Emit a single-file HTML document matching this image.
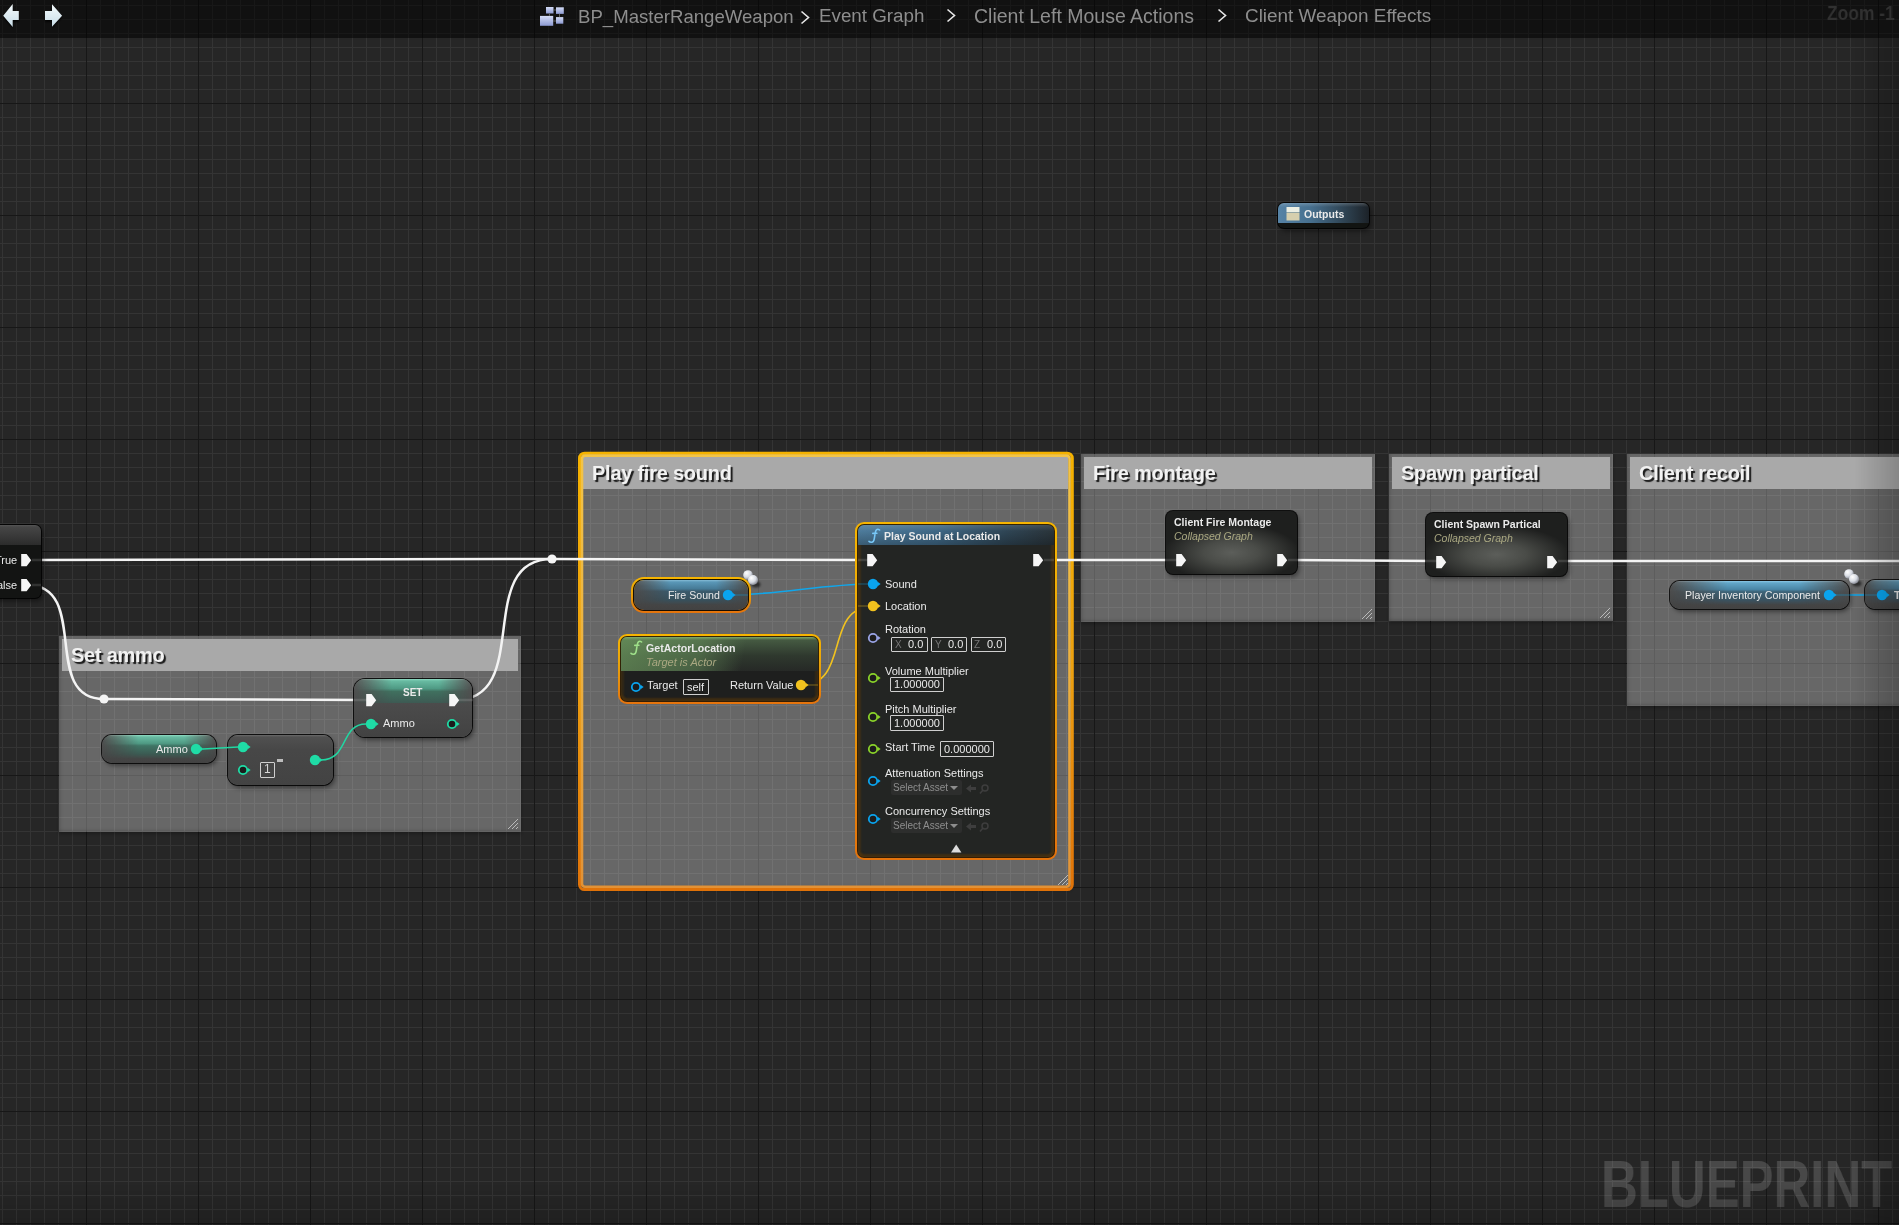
<!DOCTYPE html>
<html><head><meta charset="utf-8">
<style>
*{margin:0;padding:0;box-sizing:border-box}
html,body{width:1899px;height:1225px;overflow:hidden;background:#262626;font-family:"Liberation Sans",sans-serif}
#g{position:absolute;left:0;top:0;width:1899px;height:1225px;
background-color:#262626;
background-image:
linear-gradient(to right,#171717 1px,transparent 1px),
linear-gradient(to bottom,#171717 1px,transparent 1px),
linear-gradient(to right,#343434 1px,transparent 1px),
linear-gradient(to bottom,#343434 1px,transparent 1px);
background-size:112px 100%,100% 112px,14px 100%,100% 14px;
background-position:86px 0,0 103px,2px 0,0 5px;}
.abs{position:absolute}
.cm{position:absolute;background:rgba(255,255,255,0.30);box-shadow:inset 3px 0 3px -1px rgba(0,0,0,0.10),inset 0 -3px 3px -1px rgba(0,0,0,0.12),0 2px 3px rgba(0,0,0,0.25)}
.cmh{position:absolute;left:3px;top:3px;right:3px;height:32px;background:#a9a9a9}
.cmt{position:absolute;left:12px;top:8px;font-weight:bold;font-size:20px;letter-spacing:-0.25px;line-height:22px;color:#f2f2f2;white-space:nowrap;text-shadow:2px 2px 1px rgba(0,0,0,0.85)}
.rh{position:absolute;left:auto!important;top:auto!important;right:2px;bottom:2px;width:12px;height:12px}
#bar{position:absolute;left:0;top:0;width:1899px;height:38px;background:rgba(0,0,0,0.53)}
.crumb{position:absolute;top:5px;font-size:19px;color:#8e8e8e;white-space:nowrap}
.sep{position:absolute;top:8px}
#wm{position:absolute;left:1601px;top:1146px;font-size:66px;line-height:76px;font-weight:bold;color:rgba(255,255,255,0.16);white-space:nowrap;transform:scaleX(0.771);transform-origin:0 0;letter-spacing:0}

.node{position:absolute;border-radius:7px;background:#1d1e1d;box-shadow:0 0 0 1px rgba(0,0,0,0.85),2px 3px 5px rgba(0,0,0,0.45)}
.t11{position:absolute;font-size:11px;color:#eaeaea;white-space:nowrap;line-height:13px}
.tb{font-weight:bold}
.ti{font-style:italic;color:#aaa882}
.pill{position:absolute;border-radius:15px;box-shadow:0 0 0 1px rgba(0,0,0,0.8),2px 3px 4px rgba(0,0,0,0.4)}
.box{position:absolute;border:1px solid #cfcfcf;border-radius:1px}
svg{position:absolute;left:0;top:0;overflow:visible}

.pin{position:absolute;overflow:visible}
.sel{position:absolute;background:linear-gradient(to bottom,#f7b500,#e9a20a 45%,#e5730c);border-radius:10px}
.hdr{position:absolute;left:0;top:0;right:0}
.t11,.cmt,.crumb,#wm,#bar div{will-change:transform}

.band{position:absolute;left:0;right:0;top:0;-webkit-mask-image:linear-gradient(to right,transparent 0,rgba(0,0,0,0.35) 12%,#000 32%,#000 72%,rgba(0,0,0,0.35) 90%,transparent 100%);mask-image:linear-gradient(to right,transparent 0,rgba(0,0,0,0.35) 12%,#000 32%,#000 72%,rgba(0,0,0,0.35) 90%,transparent 100%)}
.gbase{background:linear-gradient(to bottom,#7a7a7a 0,#5a5a5a 1.5px,#4f4f4f 20%,#474747 70%,#424242 100%)}
</style></head><body>
<div id="g"></div>

<!-- comments -->
<div class="cm" style="left:59px;top:636px;width:462px;height:196px">
  <div class="cmh"></div><div class="cmt">Set ammo</div><svg class="rh" width="12" height="12"><path d="M1,11 L11,1 M5,11 L11,5 M9,11 L11,9" stroke="#d0d0d0" stroke-width="1" opacity="0.8"/></svg>
</div>
<div class="cm" style="left:580px;top:454px;width:491px;height:434px">
  <div class="cmh"></div><div class="cmt">Play fire sound</div><svg class="rh" width="12" height="12"><path d="M1,11 L11,1 M5,11 L11,5 M9,11 L11,9" stroke="#d0d0d0" stroke-width="1" opacity="0.8"/></svg>
</div>
<div class="cm" style="left:1081px;top:454px;width:294px;height:168px">
  <div class="cmh"></div><div class="cmt">Fire montage</div><svg class="rh" width="12" height="12"><path d="M1,11 L11,1 M5,11 L11,5 M9,11 L11,9" stroke="#d0d0d0" stroke-width="1" opacity="0.8"/></svg>
</div>
<div class="cm" style="left:1389px;top:454px;width:224px;height:167px">
  <div class="cmh"></div><div class="cmt">Spawn partical</div><svg class="rh" width="12" height="12"><path d="M1,11 L11,1 M5,11 L11,5 M9,11 L11,9" stroke="#d0d0d0" stroke-width="1" opacity="0.8"/></svg>
</div>
<div class="cm" style="left:1627px;top:454px;width:290px;height:252px">
  <div class="cmh"></div><div class="cmt">Client recoil</div>
</div>



<svg width="1899" height="1225" style="left:0;top:0">
 <defs>
  <linearGradient id="og" x1="0" y1="0" x2="0" y2="1"><stop offset="0" stop-color="#f5b200"/><stop offset="0.5" stop-color="#eca010"/><stop offset="1" stop-color="#e07208"/></linearGradient>
  <linearGradient id="og2" x1="0" y1="0" x2="0" y2="1"><stop offset="0" stop-color="#f3c447"/><stop offset="0.5" stop-color="#ebb040"/><stop offset="1" stop-color="#e29236"/></linearGradient>
 </defs>
 <rect x="579.5" y="453.2" width="492.8" height="436.4" rx="5" fill="none" stroke="url(#og)" stroke-width="3"/>
 <rect x="582" y="455.6" width="487.5" height="431.2" rx="3" fill="none" stroke="url(#og2)" stroke-width="2.6"/>
</svg>
<!-- wires -->
<svg width="1899" height="1225" style="left:0;top:0">
  <g fill="none" stroke="#f4f4f4" stroke-width="2.5">
    <path d="M32,560 L552,559"/>
    <path d="M552,559 L868,560"/>
    <path d="M27,585 C91,585 40,699 104,699"/>
    <path d="M104,699 L366,700"/>
    <path d="M455,700 C534,700 473,559 552,559"/>
    <path d="M1044,560 L1176,560"/>
    <path d="M1288,560 L1436,561"/>
    <path d="M1558,561 L1905,561"/>
  </g>
  <g fill="none" stroke-width="1.6">
    <path d="M728,595 C780,595 821,584 873,584" stroke="#11a6ea"/>
    <path d="M801,685 C851,685 823,606.5 873,606.5" stroke="#f1c21f"/>
    <path d="M1834,595 L1882,595" stroke="#11a6ea"/>
  </g>
  <circle cx="104" cy="699" r="4.6" fill="#f4f4f4"/>
  <circle cx="552" cy="559" r="4.6" fill="#f4f4f4"/>
</svg>


<!-- branch node (partial) -->
<div class="node" style="left:-60px;top:525px;width:100.5px;height:73px;border-radius:6px;background:#131413;overflow:hidden">
  <div class="hdr" style="height:20px;background:linear-gradient(to bottom,#555 0,#464646 2px,#2c2c2c 100%)"></div>
</div>
<div class="t11" style="right:1882px;top:554px">True</div>
<div class="t11" style="right:1882px;top:579px">alse</div>
<svg class="pin" style="left:21px;top:554px" width="12" height="13"><path d="M0.2,0 H5.6 L10.2,6.15 L5.6,12.3 H0.2 Z" fill="#f6f6f6"/></svg><svg class="pin" style="left:21px;top:579px" width="12" height="13"><path d="M0.2,0 H5.6 L10.2,6.15 L5.6,12.3 H0.2 Z" fill="#f6f6f6"/></svg>

<!-- Ammo getter -->
<div class="pill gbase" style="left:102px;top:735px;width:114px;height:28px;border-radius:10px;overflow:hidden"><div class="band" style="height:24px;background:linear-gradient(to bottom,#8fdcc4 0,#68bba2 8%,#4f9a84 35%,#3f7565 45%,#3b5a52 80%,rgba(60,80,75,0) 100%)"></div></div>
<div class="t11" style="left:156px;top:743px">Ammo</div>
<svg class="pin" style="left:190px;top:743px" width="16" height="12"><circle cx="6" cy="6" r="5.2" fill="#1fdca6"/><path d="M10.6,3.8 L13.6,6 L10.6,8.2 Z" fill="#1fdca6"/></svg>

<!-- subtract -->
<div class="node" style="left:228px;top:735px;width:105px;height:50px;border-radius:10px;background:linear-gradient(to bottom,#6a6a6a 0,#505050 2px,#474747 30%,#434343)"></div>
<svg class="pin" style="left:237px;top:741px" width="16" height="12"><circle cx="6" cy="6" r="5.2" fill="#1fdca6"/><path d="M10.6,3.8 L13.6,6 L10.6,8.2 Z" fill="#1fdca6"/></svg><svg class="pin" style="left:237px;top:764px" width="16" height="12"><circle cx="6" cy="6" r="4.2" fill="#1c1c1c" stroke="#1fdca6" stroke-width="1.8"/><path d="M10.6,3.8 L13.6,6 L10.6,8.2 Z" fill="#1fdca6"/></svg><svg class="pin" style="left:309px;top:754px" width="16" height="12"><circle cx="6" cy="6" r="5.2" fill="#1fdca6"/><path d="M10.6,3.8 L13.6,6 L10.6,8.2 Z" fill="#1fdca6"/></svg>
<div class="box" style="left:260px;top:762px;width:15px;height:16px"></div>
<div class="t11" style="left:264px;top:763px;font-size:12px;color:#d8d8d8">1</div>
<div class="abs" style="left:277px;top:759px;width:6px;height:3px;background:#bdbdbd"></div>

<!-- SET -->
<div class="node gbase" style="left:354px;top:679px;width:118px;height:58px;border-radius:11px;overflow:hidden"><div class="band" style="height:24px;background:linear-gradient(to bottom,#8fdcc4 0,#68bba2 8%,#4f9a84 40%,#40705f 52%,#3d5a53 100%)"></div></div>
<div class="t11 tb" style="left:403px;top:686px;font-size:10px">SET</div>
<svg class="pin" style="left:366px;top:694px" width="12" height="13"><path d="M0.2,0 H5.6 L10.2,6.15 L5.6,12.3 H0.2 Z" fill="#f6f6f6"/></svg><svg class="pin" style="left:449px;top:694px" width="12" height="13"><path d="M0.2,0 H5.6 L10.2,6.15 L5.6,12.3 H0.2 Z" fill="#f6f6f6"/></svg>
<svg class="pin" style="left:365px;top:718px" width="16" height="12"><circle cx="6" cy="6" r="5.2" fill="#1fdca6"/><path d="M10.6,3.8 L13.6,6 L10.6,8.2 Z" fill="#1fdca6"/></svg>
<div class="t11" style="left:383px;top:717px">Ammo</div>
<svg class="pin" style="left:446px;top:718px" width="16" height="12"><circle cx="6" cy="6" r="4.2" fill="#1c1c1c" stroke="#1fdca6" stroke-width="1.8"/><path d="M10.6,3.8 L13.6,6 L10.6,8.2 Z" fill="#1fdca6"/></svg>

<!-- Fire Sound getter (selected) -->
<div class="sel" style="left:631px;top:577px;width:120px;height:36px;border-radius:13px"></div>
<div class="pill gbase" style="left:634px;top:580px;width:114px;height:30px;border-radius:10px;overflow:hidden;box-shadow:0 0 0 1px rgba(0,0,0,0.9)"><div class="band" style="height:25px;background:linear-gradient(to bottom,#86bcd6 0,#5a98b8 8%,#467a96 35%,#3a5a6c 45%,#37505c 80%,rgba(58,80,95,0) 100%)"></div></div>
<div class="t11" style="left:668px;top:589px;font-size:10.6px">Fire Sound</div>
<svg class="pin" style="left:722px;top:589px" width="16" height="12"><circle cx="6" cy="6" r="5.2" fill="#0aa4ee"/><path d="M10.6,3.8 L13.6,6 L10.6,8.2 Z" fill="#0aa4ee"/></svg>

<!-- GetActorLocation (selected) -->
<div class="sel" style="left:618px;top:634px;width:203px;height:70px;border-radius:9px"></div>
<div class="node" style="left:621px;top:637px;width:197px;height:64px;border-radius:6px;box-shadow:0 0 0 1px rgba(30,20,5,0.9),inset 0 -3px 2px rgba(90,55,10,0.55),inset 3px 0 2px rgba(90,60,10,0.35),inset -3px 0 2px rgba(90,60,10,0.35);background:#1e1f1e;overflow:hidden">
  <div class="hdr" style="height:34px;background:linear-gradient(to bottom,rgba(140,188,116,0.75) 0,rgba(122,168,102,0.5) 1.5px,rgba(120,170,100,0) 3px),linear-gradient(100deg,rgba(110,155,95,0.7) 0,rgba(100,140,90,0.55) 40%,rgba(90,130,85,0) 62%),linear-gradient(to bottom,rgba(85,115,80,0.75) 0,rgba(60,80,58,0.4) 55%,rgba(40,45,40,0) 100%),#262926"></div>
</div>
<svg class="pin" style="left:630px;top:640px" width="13" height="16"><path d="M11.6,2 C10.6,1.2 9.2,1.1 8.4,1.8 C7.6,2.5 7.4,3.6 7.2,5 L6.2,11.2 C5.9,13 5.1,14.2 3.7,14.3 C2.6,14.4 1.6,14 1,13.4 M4.8,5.4 L8.9,5.3" fill="none" stroke="#9fe08a" stroke-width="1.6" stroke-linecap="round"/></svg>
<div class="t11 tb" style="left:646px;top:642px;font-size:10.6px">GetActorLocation</div>
<div class="t11 ti" style="left:646px;top:656px">Target is Actor</div>
<svg class="pin" style="left:630px;top:681px" width="16" height="12"><circle cx="6" cy="6" r="4.2" fill="#1c1c1c" stroke="#0aa4ee" stroke-width="1.8"/><path d="M10.6,3.8 L13.6,6 L10.6,8.2 Z" fill="#0aa4ee"/></svg>
<div class="t11" style="left:647px;top:679px">Target</div>
<div class="box" style="left:683px;top:679px;width:26px;height:16px"></div>
<div class="t11" style="left:687px;top:681px">self</div>
<div class="t11" style="left:730px;top:679px">Return Value</div>
<svg class="pin" style="left:795px;top:679px" width="16" height="12"><circle cx="6" cy="6" r="5.2" fill="#f2c21e"/><path d="M10.6,3.8 L13.6,6 L10.6,8.2 Z" fill="#f2c21e"/></svg>


<!-- Play Sound at Location (selected) -->
<div class="sel" style="left:855px;top:522px;width:202px;height:338px;border-radius:9px"></div>
<div class="node" style="left:858px;top:525px;width:196px;height:332px;border-radius:6px;box-shadow:0 0 0 1px rgba(30,20,5,0.9),inset 0 -3px 2px rgba(90,55,10,0.55),inset 3px 0 2px rgba(90,60,10,0.45),inset -3px 0 2px rgba(90,60,10,0.45);background:#232523;overflow:hidden">
  <div class="hdr" style="height:20px;background:linear-gradient(to bottom,rgba(255,255,255,0.12),rgba(0,0,0,0) 30%,rgba(0,0,0,0.25)),linear-gradient(to right,#4d7b9b,#3f6886 40%,#2f4656 75%,#2a343a)"></div>
</div>
<svg class="pin" style="left:868px;top:528px" width="13" height="16"><path d="M11.6,2 C10.6,1.2 9.2,1.1 8.4,1.8 C7.6,2.5 7.4,3.6 7.2,5 L6.2,11.2 C5.9,13 5.1,14.2 3.7,14.3 C2.6,14.4 1.6,14 1,13.4 M4.8,5.4 L8.9,5.3" fill="none" stroke="#78c8f8" stroke-width="1.6" stroke-linecap="round"/></svg>
<div class="t11 tb" style="left:884px;top:530px;font-size:10.5px">Play Sound at Location</div>
<svg class="pin" style="left:867px;top:554px" width="12" height="13"><path d="M0.2,0 H5.6 L10.2,6.15 L5.6,12.3 H0.2 Z" fill="#f6f6f6"/></svg><svg class="pin" style="left:1033px;top:554px" width="12" height="13"><path d="M0.2,0 H5.6 L10.2,6.15 L5.6,12.3 H0.2 Z" fill="#f6f6f6"/></svg>
<svg class="pin" style="left:867px;top:578px" width="16" height="12"><circle cx="6" cy="6" r="5.2" fill="#0aa4ee"/><path d="M10.6,3.8 L13.6,6 L10.6,8.2 Z" fill="#0aa4ee"/></svg><div class="t11" style="left:885px;top:578px">Sound</div>
<svg class="pin" style="left:867px;top:600px" width="16" height="12"><circle cx="6" cy="6" r="5.2" fill="#f2c21e"/><path d="M10.6,3.8 L13.6,6 L10.6,8.2 Z" fill="#f2c21e"/></svg><div class="t11" style="left:885px;top:600px">Location</div>
<svg class="pin" style="left:867px;top:632px" width="16" height="12"><circle cx="6" cy="6" r="4.2" fill="#1c1c1c" stroke="#9aa4e6" stroke-width="1.8"/><path d="M10.6,3.8 L13.6,6 L10.6,8.2 Z" fill="#9aa4e6"/></svg><div class="t11" style="left:885px;top:623px">Rotation</div>
<div class="box" style="left:891px;top:637px;width:37px;height:15px"></div>
<div class="box" style="left:931px;top:637px;width:36px;height:15px"></div>
<div class="box" style="left:971px;top:637px;width:35px;height:15px"></div>
<div class="t11" style="left:895px;top:638px;font-size:10px;color:#777">X</div><div class="t11" style="left:908px;top:638px;font-size:11px">0.0</div>
<div class="t11" style="left:935px;top:638px;font-size:10px;color:#777">Y</div><div class="t11" style="left:948px;top:638px;font-size:11px">0.0</div>
<div class="t11" style="left:974px;top:638px;font-size:10px;color:#777">Z</div><div class="t11" style="left:987px;top:638px;font-size:11px">0.0</div>
<svg class="pin" style="left:867px;top:672px" width="16" height="12"><circle cx="6" cy="6" r="4.2" fill="#1c1c1c" stroke="#8ad32a" stroke-width="1.8"/><path d="M10.6,3.8 L13.6,6 L10.6,8.2 Z" fill="#8ad32a"/></svg><div class="t11" style="left:885px;top:665px">Volume Multiplier</div>
<div class="box" style="left:890px;top:677px;width:54px;height:15px"></div><div class="t11" style="left:894px;top:678px">1.000000</div>
<svg class="pin" style="left:867px;top:711px" width="16" height="12"><circle cx="6" cy="6" r="4.2" fill="#1c1c1c" stroke="#8ad32a" stroke-width="1.8"/><path d="M10.6,3.8 L13.6,6 L10.6,8.2 Z" fill="#8ad32a"/></svg><div class="t11" style="left:885px;top:703px">Pitch Multiplier</div>
<div class="box" style="left:890px;top:715px;width:54px;height:16px"></div><div class="t11" style="left:894px;top:717px">1.000000</div>
<svg class="pin" style="left:867px;top:743px" width="16" height="12"><circle cx="6" cy="6" r="4.2" fill="#1c1c1c" stroke="#8ad32a" stroke-width="1.8"/><path d="M10.6,3.8 L13.6,6 L10.6,8.2 Z" fill="#8ad32a"/></svg><div class="t11" style="left:885px;top:741px">Start Time</div>
<div class="box" style="left:940px;top:741px;width:54px;height:16px"></div><div class="t11" style="left:944px;top:743px">0.000000</div>
<svg class="pin" style="left:867px;top:775px" width="16" height="12"><circle cx="6" cy="6" r="4.2" fill="#1c1c1c" stroke="#0aa4ee" stroke-width="1.8"/><path d="M10.6,3.8 L13.6,6 L10.6,8.2 Z" fill="#0aa4ee"/></svg><div class="t11" style="left:885px;top:767px">Attenuation Settings</div>
<div class="abs" style="left:891px;top:780px;width:71px;height:15px;background:#2d2e2d;border-radius:2px"></div>
<div class="t11" style="left:893px;top:781px;font-size:10px;color:#8e8e8e">Select Asset</div>
<svg class="pin" style="left:950px;top:784px" width="40" height="10"><path d="M0,2 L8,2 L4,6 Z" fill="#8e8e8e"/><path d="M16,4.5 L21,0.5 L21,3 L26,3 L26,6 L21,6 L21,8.5 Z" fill="#3e3e3e"/><circle cx="35" cy="4" r="3" fill="none" stroke="#3e3e3e" stroke-width="1.5"/><path d="M33,6 L30,9.5" stroke="#3e3e3e" stroke-width="1.6"/></svg>
<svg class="pin" style="left:867px;top:813px" width="16" height="12"><circle cx="6" cy="6" r="4.2" fill="#1c1c1c" stroke="#0aa4ee" stroke-width="1.8"/><path d="M10.6,3.8 L13.6,6 L10.6,8.2 Z" fill="#0aa4ee"/></svg><div class="t11" style="left:885px;top:805px">Concurrency Settings</div>
<div class="abs" style="left:891px;top:818px;width:71px;height:15px;background:#2d2e2d;border-radius:2px"></div>
<div class="t11" style="left:893px;top:819px;font-size:10px;color:#8e8e8e">Select Asset</div>
<svg class="pin" style="left:950px;top:822px" width="40" height="10"><path d="M0,2 L8,2 L4,6 Z" fill="#8e8e8e"/><path d="M16,4.5 L21,0.5 L21,3 L26,3 L26,6 L21,6 L21,8.5 Z" fill="#3e3e3e"/><circle cx="35" cy="4" r="3" fill="none" stroke="#3e3e3e" stroke-width="1.5"/><path d="M33,6 L30,9.5" stroke="#3e3e3e" stroke-width="1.6"/></svg>
<svg class="pin" style="left:951px;top:844px" width="12" height="10"><path d="M0,8.5 L5.2,0.5 L10.4,8.5 Z" fill="#dcdcdc"/></svg>

<!-- Client Fire Montage -->
<div class="node" style="left:1166px;top:511px;width:131px;height:63px;background:radial-gradient(ellipse 52% 46% at 50% 66%,#5c5e5a 0%,#4a4c48 40%,rgba(30,31,30,0) 100%),#1e1f1e"></div>
<div class="t11 tb" style="left:1174px;top:516px;font-size:10.5px">Client Fire Montage</div>
<div class="t11 ti" style="left:1174px;top:530px;font-size:10.5px">Collapsed Graph</div>
<svg class="pin" style="left:1176px;top:554px" width="12" height="13"><path d="M0.2,0 H5.6 L10.2,6.15 L5.6,12.3 H0.2 Z" fill="#f6f6f6"/></svg><svg class="pin" style="left:1277px;top:554px" width="12" height="13"><path d="M0.2,0 H5.6 L10.2,6.15 L5.6,12.3 H0.2 Z" fill="#f6f6f6"/></svg>

<!-- Client Spawn Partical -->
<div class="node" style="left:1426px;top:513px;width:141px;height:63px;background:radial-gradient(ellipse 52% 46% at 50% 66%,#5c5e5a 0%,#4a4c48 40%,rgba(30,31,30,0) 100%),#1e1f1e"></div>
<div class="t11 tb" style="left:1434px;top:518px;font-size:10.5px">Client Spawn Partical</div>
<div class="t11 ti" style="left:1434px;top:532px;font-size:10.5px">Collapsed Graph</div>
<svg class="pin" style="left:1436px;top:556px" width="12" height="13"><path d="M0.2,0 H5.6 L10.2,6.15 L5.6,12.3 H0.2 Z" fill="#f6f6f6"/></svg><svg class="pin" style="left:1547px;top:556px" width="12" height="13"><path d="M0.2,0 H5.6 L10.2,6.15 L5.6,12.3 H0.2 Z" fill="#f6f6f6"/></svg>

<!-- Player Inventory Component -->
<div class="pill gbase" style="left:1670px;top:581px;width:179px;height:27.5px;border-radius:10px;overflow:hidden"><div class="band" style="height:24px;background:linear-gradient(to bottom,#8cc8e6 0,#62a6c8 8%,#4a86a6 35%,#3d6378 45%,#3a5260 80%,rgba(58,80,95,0) 100%)"></div></div>
<div class="t11" style="left:1685px;top:589px;font-size:10.65px">Player Inventory Component</div>
<svg class="pin" style="left:1823px;top:589px" width="16" height="12"><circle cx="6" cy="6" r="5.2" fill="#0aa4ee"/><path d="M10.6,3.8 L13.6,6 L10.6,8.2 Z" fill="#0aa4ee"/></svg>
<div class="pill gbase" style="left:1865px;top:580px;width:80px;height:29px;border-radius:10px;overflow:hidden"><div class="band" style="height:24px;-webkit-mask-image:linear-gradient(to right,transparent 0,rgba(0,0,0,0.4) 12px,#000 40px);mask-image:linear-gradient(to right,transparent 0,rgba(0,0,0,0.4) 12px,#000 40px);background:linear-gradient(to bottom,#8cc8e6 0,#62a6c8 8%,#4a86a6 35%,#3d6378 45%,#3a5260 80%,rgba(58,80,95,0) 100%)"></div></div>
<svg class="pin" style="left:1876px;top:589px" width="16" height="12"><circle cx="6" cy="6" r="5.2" fill="#0aa4ee"/><path d="M10.6,3.8 L13.6,6 L10.6,8.2 Z" fill="#0aa4ee"/></svg>
<div class="t11 tb" style="left:1894px;top:589px">T</div>

<!-- Outputs -->
<div class="node" style="left:1278px;top:203px;width:91px;height:25px;border-radius:6px;background:#121412;overflow:hidden">
  <div class="hdr" style="height:20px;background:linear-gradient(to bottom,rgba(255,255,255,0.18),rgba(0,0,0,0) 20%),linear-gradient(to right,#5683a6,#47708f 35%,#2a3b48 80%,#1c2228)"></div>
</div>
<svg class="pin" style="left:1286px;top:207px" width="14" height="14"><rect x="0.5" y="0" width="13" height="5" fill="#ecefe4"/><rect x="0.5" y="5.5" width="13" height="8" fill="#d6cfae"/></svg>
<div class="t11 tb" style="left:1304px;top:208px;font-size:10.5px">Outputs</div>

<!-- double balls -->
<svg class="pin" style="left:740px;top:567px" width="20" height="20"><defs><radialGradient id="bl" cx="35%" cy="30%" r="70%"><stop offset="0" stop-color="#fff"/><stop offset="0.6" stop-color="#d8dce4"/><stop offset="1" stop-color="#8c8f99"/></radialGradient></defs><filter id="bsh" x="-50%" y="-50%" width="200%" height="200%"><feGaussianBlur stdDeviation="1"/></filter><ellipse cx="16" cy="17.5" rx="4.5" ry="3" fill="#000" opacity="0.55" filter="url(#bsh)"/><circle cx="8" cy="8" r="4.8" fill="url(#bl)"/><circle cx="13" cy="13" r="5" fill="url(#bl)"/></svg>
<svg class="pin" style="left:1841px;top:567px" width="20" height="20"><ellipse cx="16" cy="16.5" rx="4.5" ry="3" fill="#000" opacity="0.55" filter="url(#bsh)"/><circle cx="8" cy="7" r="4.8" fill="url(#bl)"/><circle cx="13" cy="12" r="5" fill="url(#bl)"/></svg>

<!-- top-layer wire segments -->
<svg width="1899" height="1225" style="left:0;top:0;pointer-events:none">
  <g fill="none" stroke-width="1.6">
    <path d="M203,749 L238,747" stroke="#22d6a2"/>
    <path d="M321,760 C349,760 340,724 366,724" stroke="#22d6a2"/>
  </g>
  <g fill="none" stroke="rgba(255,255,255,0.13)" stroke-width="2.5">
    <path d="M32,560 L41,560"/><path d="M32,585 L41,585"/>
    <path d="M354,700 L367,700"/><path d="M459,700 L473,700"/>
    <path d="M858,560 L868,560"/><path d="M1044,560 L1054,560"/>
    <path d="M1165,560 L1177,560"/><path d="M1288,560 L1298,560"/>
    <path d="M1425,561 L1437,561"/><path d="M1558,561 L1568,561"/>
  </g>
  <g fill="none" stroke-width="1.6" opacity="0.28">
    <path d="M858,584 L868,584" stroke="#11a6ea"/>
    <path d="M858,606 L868,606" stroke="#f1c21f"/>
    <path d="M735,595 L748,595" stroke="#11a6ea"/>
    <path d="M806,685 L818,685" stroke="#f1c21f"/>
    <path d="M1834,595 L1850,595" stroke="#11a6ea"/>
    <path d="M1865,595 L1880,595" stroke="#11a6ea"/>
  </g>
</svg>

<div id="wm">BLUEPRINT</div>

<div class="abs" style="left:1855px;top:38px;width:44px;height:1187px;background:linear-gradient(to right,rgba(0,0,0,0),rgba(0,0,0,0.2))"></div>
<div class="abs" style="left:0;top:1185px;width:1899px;height:40px;background:linear-gradient(to bottom,rgba(0,0,0,0),rgba(0,0,0,0.16))"></div>
<!-- top bar -->
<div id="bar">
  <svg class="pin" style="left:0;top:0" width="70" height="38">
   <defs><linearGradient id="ag" x1="0" y1="0" x2="0" y2="1"><stop offset="0" stop-color="#f4fafc"/><stop offset="1" stop-color="#c8dde8"/></linearGradient>
   <filter id="ash" x="-50%" y="-50%" width="200%" height="200%"><feGaussianBlur stdDeviation="1.2"/></filter></defs>
   <path d="M3.2,17.6 L12.7,6.5 L12.7,12.9 L18.8,12.9 L18.8,22 L12.7,22 L12.7,28.5 Z" fill="#000" opacity="0.8" filter="url(#ash)"/>
   <path d="M62.1,17.6 L52,6.5 L52,12.9 L45,12.9 L45,22 L52,22 L52,28.5 Z" fill="#000" opacity="0.8" filter="url(#ash)"/>
   <path d="M3.2,15.7 L12.7,4.1 L12.7,10.9 L18.8,10.9 L18.8,20.1 L12.7,20.1 L12.7,26.9 Z" fill="url(#ag)"/>
   <path d="M62.1,15.7 L52,4.3 L52,10.9 L45,10.9 L45,20.1 L52,20.1 L52,26.8 Z" fill="url(#ag)"/>
  </svg>
  <svg class="pin" style="left:538px;top:5px" width="28" height="23">
   <defs><linearGradient id="ig" x1="0" y1="0" x2="0" y2="1"><stop offset="0" stop-color="#d4dcf6"/><stop offset="1" stop-color="#8d9ad2"/></linearGradient></defs>
   <rect x="8" y="2" width="7.5" height="6.5" fill="url(#ig)"/>
   <rect x="18" y="2.3" width="7.8" height="6.6" fill="url(#ig)"/>
   <rect x="2" y="10.9" width="13.2" height="9.9" fill="url(#ig)"/>
   <rect x="18" y="12.1" width="7.3" height="6.6" fill="url(#ig)"/>
   <path d="M15.5,5 H18 M11.5,8.5 V10.9 M21.5,8.9 V12.1 M15.2,16 H18" stroke="#777" stroke-width="0.8"/>
  </svg>
  <svg class="pin" style="left:800px;top:10px" width="12" height="16"><path d="M1.5,1.5 L8.5,7.5 L1.5,13.5" fill="none" stroke="#e8e8e8" stroke-width="1.6"/></svg>
  <svg class="pin" style="left:946px;top:8px" width="12" height="16"><path d="M1.5,1.5 L8.5,7.5 L1.5,13.5" fill="none" stroke="#e8e8e8" stroke-width="1.6"/></svg>
  <svg class="pin" style="left:1217px;top:8px" width="12" height="16"><path d="M1.5,1.5 L8.5,7.5 L1.5,13.5" fill="none" stroke="#e8e8e8" stroke-width="1.6"/></svg>

  <div class="crumb" style="left:577.5px;top:6px;font-size:18.6px">BP_MasterRangeWeapon</div>
  <div class="crumb" style="left:819px;top:5px;font-size:18.8px">Event Graph</div>
  <div class="crumb" style="left:974px;top:5px;font-size:19.5px">Client Left Mouse Actions</div>
  <div class="crumb" style="left:1245px;top:5px;font-size:18.9px">Client Weapon Effects</div>
  <div class="abs" style="left:1827px;top:2px;font-size:20px;font-weight:bold;color:#313131;white-space:nowrap;transform:scaleX(0.87);transform-origin:0 0">Zoom -1</div>
</div>
</body></html>
